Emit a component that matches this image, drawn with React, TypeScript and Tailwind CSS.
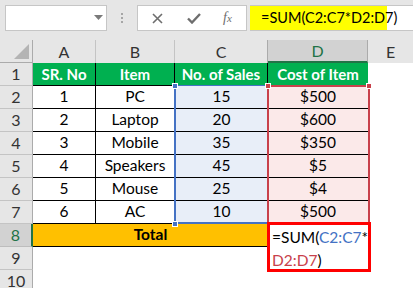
import React from "react";

const font = { fontFamily: "Lato, 'Open Sans', sans-serif" };

type Row = { n: string; a: string; b: string; c: string; d: string };
const rows: Row[] = [
  { n: "2", a: "1", b: "PC", c: "15", d: "$500" },
  { n: "3", a: "2", b: "Laptop", c: "20", d: "$600" },
  { n: "4", a: "3", b: "Mobile", c: "35", d: "$350" },
  { n: "5", a: "4", b: "Speakers", c: "45", d: "$5" },
  { n: "6", a: "5", b: "Mouse", c: "25", d: "$4" },
  { n: "7", a: "6", b: "AC", c: "10", d: "$500" },
];

function RowHead({ n, active }: { n: string; active?: boolean }) {
  return (
    <div
      className={
        active
          ? "flex items-center justify-center bg-[#d2d2d2] text-[#217346] border-b border-[#bdbdbd] border-r-2 border-r-[#217346] text-[16px]"
          : "flex items-center justify-center bg-[#e6e6e6] text-[#333] border-b border-[#c4c4c4] border-r border-r-[#ababab] text-[16px]"
      }
    >
      {n}
    </div>
  );
}

export default function App() {
  return (
    <div className="w-[413px] h-[288px] overflow-hidden bg-white relative" style={font}>
      {/* formula bar */}
      <div className="h-[40px] bg-[#e6e6e6] flex items-start pt-[5px] pl-[5px]">
        <div className="w-[102px] h-[26px] bg-white border border-[#c6c6c6] relative">
          <svg className="absolute left-[88px] top-[9px]" width="9" height="6" viewBox="0 0 9 6">
            <polygon points="0,0 9,0 4.5,5" fill="#7a7a7a" />
          </svg>
        </div>
        <div className="w-[30px] h-[26px] flex flex-col items-center justify-center gap-[2px]">
          <div className="w-[2px] h-[2px] bg-[#a6a6a6]" />
          <div className="w-[2px] h-[2px] bg-[#a6a6a6]" />
          <div className="w-[2px] h-[2px] bg-[#a6a6a6]" />
        </div>
        <div className="w-[110px] h-[26px] bg-white border border-[#c6c6c6] flex items-center">
          <svg className="ml-[14px]" width="11" height="11" viewBox="0 0 11 11">
            <path d="M1 1 L10 10 M10 1 L1 10" stroke="#6e6e6e" strokeWidth="1.6" />
          </svg>
          <svg className="ml-[24px]" width="14" height="11" viewBox="0 0 14 11">
            <path d="M1 5.5 L5 9.5 L13 1" stroke="#6e6e6e" strokeWidth="2.4" fill="none" />
          </svg>
          <span
            className="ml-[22px] text-[14px] italic text-[#6e6e6e] leading-none"
            style={{ fontFamily: "'Liberation Serif', serif" }}
          >
            f<span className="text-[11px]">x</span>
          </span>
        </div>
        <div className="ml-[3px] flex-1 h-[26px] bg-white border-y border-[#c6c6c6] flex items-stretch">
          <div className="w-[137px] bg-[#ffff00] flex items-center pl-[11px] text-[14.5px] text-black whitespace-nowrap">
            =SUM(C2:C7*D2:D7)
          </div>
        </div>
      </div>

      {/* grid */}
      <div className="relative">
        <div className="grid grid-cols-[33px_63px_79px_93px_100px_45px] auto-rows-[23px]">
          {/* column headers */}
          <div className="bg-[#e6e6e6] border-r border-b border-[#ababab] relative">
            <svg className="absolute right-[3px] bottom-[3px]" width="15" height="15" viewBox="0 0 15 15">
              <polygon points="15,0 15,15 0,15" fill="#b4b4b4" />
            </svg>
          </div>
          <div className="bg-[#e6e6e6] border-r border-[#c4c4c4] flex items-center justify-center text-[16px] text-[#333]">A</div>
          <div className="bg-[#e6e6e6] border-r border-[#c4c4c4] flex items-center justify-center text-[16px] text-[#333]">B</div>
          <div className="bg-[#e6e6e6] border-r border-[#ababab] flex items-center justify-center text-[16px] text-[#333]">C</div>
          <div className="bg-[#d2d2d2] border-r border-[#ababab] border-b-2 border-b-[#217346] flex items-center justify-center text-[16px] text-[#217346]">D</div>
          <div className="bg-[#e6e6e6] flex items-center justify-center text-[16px] text-[#333]">E</div>

          {/* row 1 */}
          <RowHead n="1" />
          <div className="bg-[#00b050] border-r border-b border-black flex items-center justify-center text-white font-bold text-[15px]">SR. No</div>
          <div className="bg-[#00b050] border-r border-b border-black flex items-center justify-center text-white font-bold text-[15px]">Item</div>
          <div className="bg-[#00b050] border-r border-b border-black flex items-center justify-center text-white font-bold text-[15px] whitespace-nowrap">No. of Sales</div>
          <div className="bg-[#00b050] border-b border-black flex items-center justify-center text-white font-bold text-[15px] whitespace-nowrap">Cost of Item</div>
          <div className="bg-white" />

          {rows.map((r) => (
            <React.Fragment key={r.n}>
              <RowHead n={r.n} />
              <div className="border-r border-b border-black flex items-center justify-center text-[15.5px] text-black">{r.a}</div>
              <div className="border-r border-b border-black flex items-center justify-center text-[15.5px] text-black">{r.b}</div>
              <div className="bg-[#e8eef8] border-b border-black flex items-center justify-center text-[15.5px] text-black">{r.c}</div>
              <div className="bg-[#fbe9e9] border-b border-black flex items-center justify-center text-[15.5px] text-black">{r.d}</div>
              <div className="bg-white" />
            </React.Fragment>
          ))}

          {/* row 8 */}
          <RowHead n="8" active />
          <div className="col-span-3 bg-[#ffc000] border-b border-black flex items-center justify-center text-[15.5px] font-bold text-black">Total</div>
          <div className="bg-white" />
          <div className="bg-white" />

          <RowHead n="9" />
          <div className="col-span-5 bg-white" />
          <RowHead n="10" />
          <div className="col-span-5 bg-white" />
        </div>

        {/* C2:C7 range (blue) */}
        <div className="absolute left-[174px] top-[45px] w-[95px] h-[139px] border-l-2 border-t border-b-2 border-[#4472c4]" />
        {/* D2:D7 range (red) */}
        <div className="absolute left-[267px] top-[45px] w-[103px] h-[139px] border-2 border-[#c8414b]" />
        {/* handles */}
        <div className="absolute left-[172px] top-[43px] w-[6px] h-[6px] bg-[#4472c4] border border-white" />
        <div className="absolute left-[172px] top-[181px] w-[6px] h-[6px] bg-[#4472c4] border border-white" />
        <div className="absolute left-[265px] top-[43px] w-[6px] h-[6px] bg-[#c8414b] border border-white" />
        <div className="absolute left-[366px] top-[43px] w-[6px] h-[6px] bg-[#c8414b] border border-white" />

        {/* editing cell D8 */}
        <div className="absolute left-[267px] top-[182px] w-[104px] h-[50px] border-[3px] border-[#ff0000] bg-white pl-[2px] pt-[1px] text-[15.5px] leading-[23px] text-black whitespace-nowrap">
          =SUM(<span className="text-[#4472c4]">C2:C7</span>*
          <br />
          <span className="text-[#c8414b]">D2:D7</span>)
        </div>
      </div>
    </div>
  );
}
